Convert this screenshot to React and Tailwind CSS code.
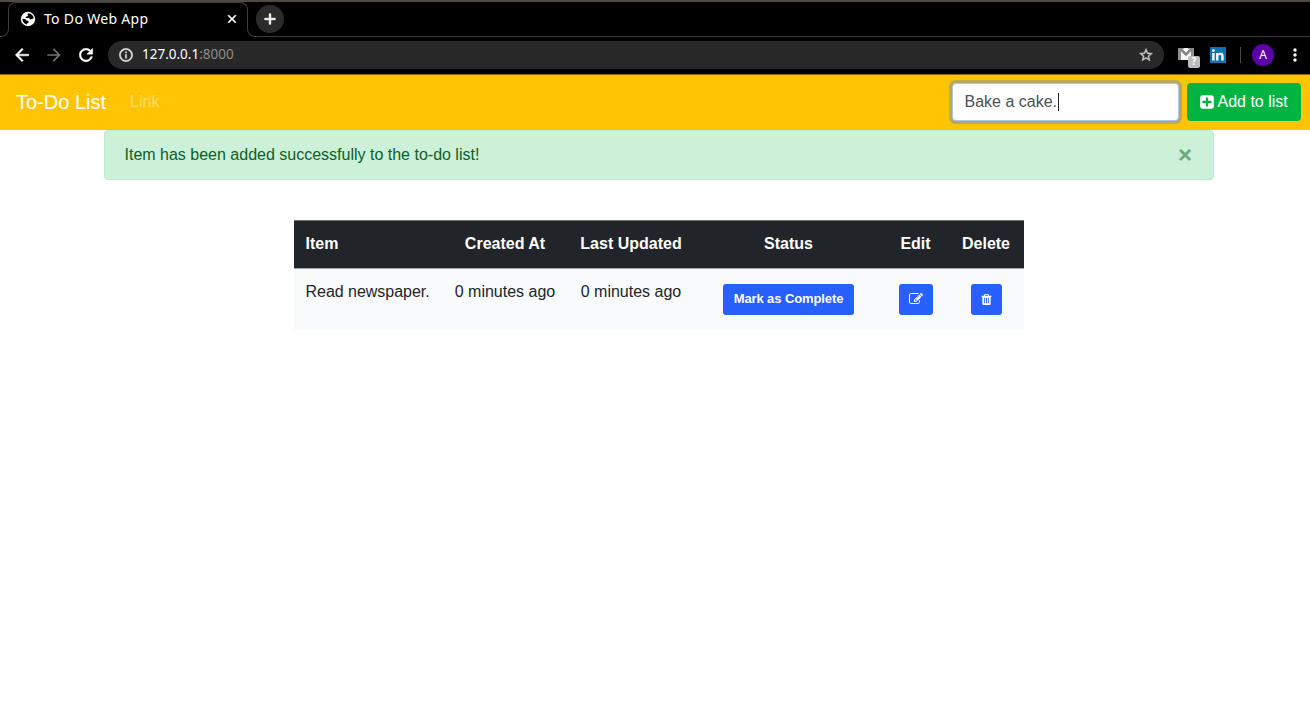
import React from "react";
import { MdArrowBack, MdArrowForward, MdRefresh, MdInfoOutline, MdStarBorder, MdMoreVert, MdClose, MdAdd } from "react-icons/md";

const glyphs = {
  plus: "M1408 960v-128q0-26-19-45t-45-19h-320v-320q0-26-19-45t-45-19h-128q-26 0-45 19t-19 45v320h-320q-26 0-45 19t-19 45v128q0 26 19 45t45 19h320v320q0 26 19 45t45 19h128q26 0 45-19t19-45v-320h320q26 0 45-19t19-45zm256-544v960q0 119-84.5 203.5t-203.5 84.5h-960q-119 0-203.5-84.5t-84.5-203.5v-960q0-119 84.5-203.5t203.5-84.5h960q119 0 203.5 84.5t84.5 203.5z",
  edit: "M888 1184l116-116-152-152-116 116v56h96v96h56zm440-720q-16-16-33 1l-350 350q-17 17-1 33t33-1l350-350q17-17 1-33zm80 594v190q0 119-84.5 203.5t-203.5 84.5h-832q-119 0-203.5-84.5t-84.5-203.5v-832q0-119 84.5-203.5t203.5-84.5h832q63 0 117 25 15 7 18 23 3 17-9 29l-49 49q-14 14-32 8-23-6-45-6h-832q-66 0-113 47t-47 113v832q0 66 47 113t113 47h832q66 0 113-47t47-113v-126q0-13 9-22l64-64q15-15 35-7t20 29zm-96-738l288 288-672 672h-288v-288zm444 132l-92 92-288-288 92-92q28-28 68-28t68 28l152 152q28 28 28 68t-28 68z",
  trash: "M704 1376v-704q0-14-9-23t-23-9h-64q-14 0-23 9t-9 23v704q0 14 9 23t23 9h64q14 0 23-9t9-23zm256 0v-704q0-14-9-23t-23-9h-64q-14 0-23 9t-9 23v704q0 14 9 23t23 9h64q14 0 23-9t9-23zm256 0v-704q0-14-9-23t-23-9h-64q-14 0-23 9t-9 23v704q0 14 9 23t23 9h64q14 0 23-9t9-23zm-544-992h448l-48-117q-7-9-17-11h-317q-10 2-17 11zm928 32v64q0 14-9 23t-23 9h-96v948q0 83-47 143.5t-113 60.5h-832q-66 0-113-58.5t-47-141.5v-952h-96q-14 0-23-9t-9-23v-64q0-14 9-23t23-9h309l70-167q15-37 54-63t79-26h320q40 0 79 26t54 63l70 167h309q14 0 23 9t9 23z",
};

function Glyph({ name, className }) {
  return (
    <svg viewBox="0 0 1792 1792" fill="currentColor" className={className}>
      <path d={glyphs[name]} />
    </svg>
  );
}

function Globe() {
  return (
    <svg viewBox="0 0 16 16" className="size-4">
      <circle cx="8" cy="8" r="7.200" fill="#fff" />
      <path d="M8.500 2.300c-1 .3-1 1.200-.6 1.700.5.700-.4 1.300-1.300 1.400-.9.100-.7 1.400-1.500 1.700h3.500c1 0 1 1.500 2.200 1.500.9 0 1-1 2.900-1C13.500 4.800 11.500 2.700 8.500 2.300zM2.300 7.800c.1 2.800 1.900 5 4.700 5.700v-1.200c1.200 0 1.700-.7 1.700-1.500 0-.9-.8-1-1.700-1.100-1 0-.9-1.700-2.200-1.800z" fill="#000" />
    </svg>
  );
}

function TabStrip() {
  return (
    <div className="flex h-[37px] border-t-2 border-[#4d4b44] bg-black">
      <div className="flex w-[9px] items-end pt-[9px]">
        <div className="h-full w-full rounded-br-lg border-r border-b border-[#3d3d3d]" />
      </div>
      <div className="-ml-px flex w-[240px] flex-col">
        <div className="h-3 rounded-t-lg border-x border-t border-[#3d3d3d]" />
        <div className="-mt-[7px] flex items-center pl-3 pr-[9px]">
          <Globe />
          <span className="ml-2 flex-1 text-[14px] leading-6 tracking-[0.32px] whitespace-nowrap">To Do Web App</span>
          <MdClose className="size-3.5 [&>path:last-child]:stroke-1" />
        </div>
      </div>
      <div className="-ml-px flex flex-1 pt-[9px]">
        <div className="flex flex-1 items-center rounded-bl-lg border-b border-l border-[#3d3d3d] pl-2">
          <button className="-mt-[9px] flex size-7 items-center justify-center rounded-full bg-[#2b2b2b]">
            <MdAdd className="size-[18px] [&>path:last-child]:stroke-1" />
          </button>
        </div>
      </div>
    </div>
  );
}

function Toolbar() {
  return (
    <div className="flex h-[37px] items-center bg-black pb-[2px] pl-3">
      <MdArrowBack className="size-5 [&>path:last-child]:stroke-[0.6]" />
      <MdArrowForward className="ml-3 size-5 text-[#707070]" />
      <MdRefresh className="ml-3 size-5 [&>path:last-child]:stroke-[0.6]" />
      <div className="ml-3 flex h-7 w-[1056px] items-center rounded-full bg-[#282828] pl-2.5 pr-2.5">
        <MdInfoOutline className="size-4 text-[#e0e0e0] [&>path:last-child]:stroke-[0.6]" />
        <span className="ml-2 flex-1 text-[13.5px]">
          127.0.0.1<span className="text-[#8c8c8c]">:8000</span>
        </span>
        <MdStarBorder className="size-4 text-[#c8c8c8] [&>path:last-child]:stroke-[0.6]" />
      </div>
      <div className="relative ml-3.5 h-4 w-4">
        <svg viewBox="0 0 16 12" className="mt-px h-3 w-4">
          <rect width="16" height="12" fill="#909090" />
          <path d="M3 1h10v11H3z" fill="#f6f6f6" />
          <path d="M1.500 0L8 6.500 14.500 0" fill="none" stroke="#858585" strokeWidth="2.600" />
          <path d="M5.500 0h5L8 2.500z" fill="#f6f6f6" />
        </svg>
        <span className="absolute top-[9px] left-2.5 flex h-3 w-3 items-center justify-center rounded-[2px] bg-[#bdbdbd] text-[10px] font-bold text-white">?</span>
      </div>
      <svg viewBox="0 0 16 16" className="ml-4 size-4">
        <rect width="16" height="16" rx="0.5" fill="#0a75b5" />
        <circle cx="3.4" cy="3.6" r="1.4" fill="#fff" />
        <path d="M2.200 6h2.400v7.500H2.200zM6.100 6h2.200v1c.4-.7 1.200-1.200 2.400-1.200 2.300 0 2.900 1.500 2.900 3.500v4.200h-2.300V9.800c0-1.100-.2-2-1.400-2-1.200 0-1.500.9-1.500 2v3.700H6.100z" fill="#fff" />
      </svg>
      <div className="ml-3.5 h-4 w-px bg-[#494949]" />
      <div className="ml-[11px] flex size-[22px] items-center justify-center rounded-full bg-[#5b00a8] text-[12px]">A</div>
      <MdMoreVert className="ml-[11px] size-5" />
    </div>
  );
}

function Navbar() {
  return (
    <nav className="flex h-14 items-center border-t border-[#8a6a02] bg-[#ffc505] pb-px pl-4 pr-[9px] text-white">
      <span className="text-[20px]">To-Do List</span>
      <span className="ml-6 flex-1 text-base text-white/40">Link</span>
      <div className="flex h-[38px] w-[227px] items-center rounded-[4px] border border-[#a9c8dd] bg-white pl-[11.5px] text-base text-[#495057] shadow-[0_0_1px_2.500px_#b6a66a]">
        Bake a cake.
        <span className="ml-[0.5px] h-[18px] w-px bg-[#222]" />
      </div>
      <button className="ml-2 flex h-[38px] w-[114px] items-center rounded-[4px] bg-[#00b441] pl-[11.5px] text-base whitespace-nowrap">
        <Glyph name="plus" className="mr-[3px] size-4" />
        Add to list
      </button>
    </nav>
  );
}

const buttonStyle = "flex h-[31px] items-center justify-center rounded-[3px] bg-[#2860ff] pb-px text-[13px] font-bold text-white";

function TodoTable() {
  return (
    <table className="mt-10 ml-[294px] w-[730px] table-fixed border-separate border-spacing-0 text-center text-base">
      <colgroup>
        <col className="w-[148px]" />
        <col className="w-[126px]" />
        <col className="w-[126px]" />
        <col className="w-[189px]" />
        <col className="w-[65px]" />
        <col className="w-[76px]" />
      </colgroup>
      <thead className="bg-[#212529] text-white [&_th]:border-t [&_th]:border-b [&_th]:border-t-[#6f7275] [&_th]:border-b-[#a0a3a5] [&_th]:pb-px">
        <tr className="h-[49px]">
          <th className="pl-[11.5px] text-left">Item</th>
          <th>Created At</th>
          <th>Last Updated</th>
          <th>Status</th>
          <th>Edit</th>
          <th>Delete</th>
        </tr>
      </thead>
      <tbody className="bg-[#f8fafc] text-[#212529]">
        <tr className="h-[61px] align-top">
          <td className="pt-[11px] pl-[11.5px] text-left tracking-[-0.03px]">Read newspaper.</td>
          <td className="pt-[11px]">0 minutes ago</td>
          <td className="pt-[11px]">0 minutes ago</td>
          <td className="pt-[15px]"><button className={`${buttonStyle} mx-auto w-[131px] tracking-[-0.1px]`}>Mark as Complete</button></td>
          <td className="pt-[15px]"><button className={`${buttonStyle} mx-auto w-[34px]`}><Glyph name="edit" className="size-3.5" /></button></td>
          <td className="pt-[15px]"><button className={`${buttonStyle} mx-auto w-[31px]`}><Glyph name="trash" className="size-[13px]" /></button></td>
        </tr>
      </tbody>
    </table>
  );
}

export default function App() {
  return (
    <div className="h-[715px] overflow-hidden bg-white font-['Liberation_Sans',sans-serif]">
      <header className="font-['Noto_Sans',sans-serif] text-white">
        <TabStrip />
        <Toolbar />
      </header>
      <Navbar />
      <div className="ml-[104px] flex h-[50px] w-[1110px] items-center justify-between rounded-[4px] border border-[#bdeacb] bg-[#ccf0d8] pl-[19.500px] pr-[21px] text-base text-[#0b6129]">
        <span>Item has been added successfully to the to-do list!</span>
        <span className="text-[24px] leading-none font-bold text-[#69a97e]">×</span>
      </div>
      <TodoTable />
    </div>
  );
}
